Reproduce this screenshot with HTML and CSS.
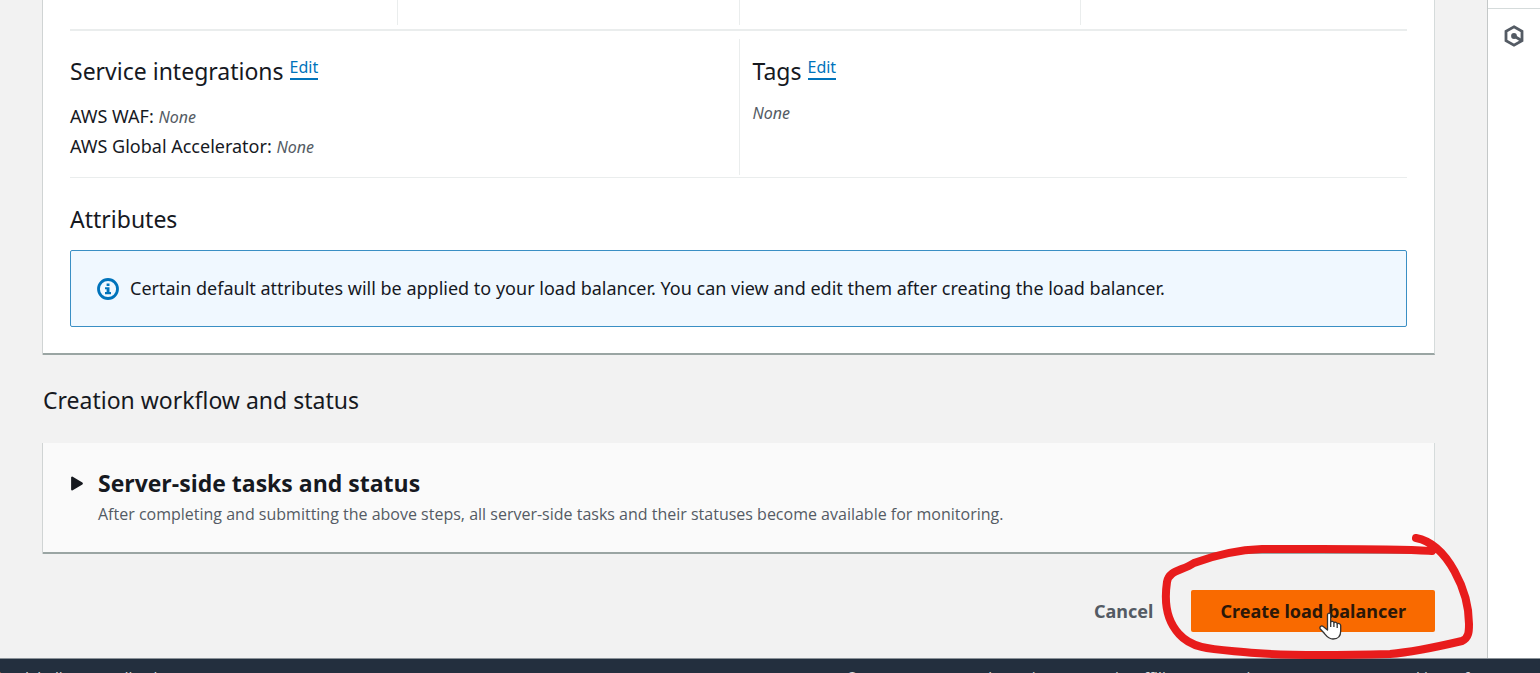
FILE: index.html
```html
<!DOCTYPE html>
<html lang="en">
<head>
<meta charset="utf-8">
<title>Create load balancer</title>
<link rel="stylesheet" href="styles.css">
</head>
<body>
<div class="workspace">
  <main class="content">
    <section class="card summary">
      <div class="summary-row summary-row-previous">
        <div class="cell"></div>
        <div class="cell"></div>
        <div class="cell"></div>
        <div class="cell"></div>
      </div>
      <div class="summary-row summary-row-details">
        <div class="cell">
          <h2 class="heading">Service integrations <a class="edit" href="#integrations">Edit</a></h2>
          <p class="detail">AWS WAF: <em class="none">None</em></p>
          <p class="detail">AWS Global Accelerator: <em class="none">None</em></p>
        </div>
        <div class="cell">
          <h2 class="heading">Tags <a class="edit" href="#tags">Edit</a></h2>
          <p class="tag-value"><em class="none">None</em></p>
        </div>
      </div>
      <div class="attributes">
        <h2 class="heading">Attributes</h2>
        <div class="notice">
          <svg class="notice-icon" viewBox="0 0 22 22" aria-hidden="true">
            <circle cx="11" cy="11" r="9.5" fill="none" stroke="currentColor" stroke-width="2.8"/>
            <path d="M9.600 5.400h2.900v2.500H9.600z M8 9.200h4.500v4.800h1.500v2.200H8v-2.200h1.600v-2.700H8z" fill="currentColor"/>
          </svg>
          <p class="notice-text">Certain default attributes will be applied to your load balancer. You can view and edit them after creating the load balancer.</p>
        </div>
      </div>
    </section>
    <h2 class="heading workflow-heading">Creation workflow and status</h2>
    <section class="card tasks">
      <button class="expander" type="button" aria-expanded="false" aria-label="Expand server-side tasks and status">
        <svg class="caret" viewBox="0 0 12 14" aria-hidden="true"><path d="M1.500 1.500v11L10.500 7z" fill="currentColor" stroke="currentColor" stroke-width="2" stroke-linejoin="round"/></svg>
      </button>
      <div>
        <h3 class="tasks-title">Server-side tasks and status</h3>
        <p class="tasks-text">After completing and submitting the above steps, all server-side tasks and their statuses become available for monitoring.</p>
      </div>
    </section>
    <div class="actions">
      <button class="button button-link" type="button">Cancel</button>
      <button class="button button-primary" type="button">Create load balancer</button>
      <svg class="annotation" viewBox="0 0 320 130" aria-hidden="true">
        <path d="M272 21C240 18 150 19 102 19C75 20 50 27 34 33C22 41 9 40 7 52C4 72 6 90 19 104C34 121 57 119 95 123C130 126 190 125 230 124C255 122 285 115 302 111C309 108 309 101 309 94C309 62 288 14 256 8" fill="none" stroke="#e81c1c" stroke-width="8" stroke-linecap="round" stroke-linejoin="round"/>
      </svg>
      <svg class="pointer" viewBox="0 0 24 28" aria-hidden="true">
        <path d="M8.500 3C8.500.5 11.700.5 11.700 3V10C12.500 8.800 14.700 9.200 14.900 10.700C16 9.700 18 10.200 18.200 11.800C19.500 11 21.700 11.800 21.700 13.800V19C21.700 24.500 18.500 27 14 27C9.500 27 7.500 24 5 21L1.300 17C0 15.200 2.300 13 4.200 14.500L8.500 18z" fill="#fff" stroke="#333" stroke-width="1.300" stroke-linejoin="round"/>
        <path d="M11.700 10v5M14.900 11v4M18.200 12v4" fill="none" stroke="#333" stroke-width="1.300"/>
      </svg>
    </div>
  </main>
  <aside class="tools">
    <button class="tool" type="button" aria-label="Resource tools">
      <svg class="tool-icon" viewBox="0 0 22 22" aria-hidden="true">
        <path d="M11 1.800 19 6.300V15.700L11 20.200 3 15.700V6.300z" fill="none" stroke="currentColor" stroke-width="2.800"/>
        <circle cx="11" cy="11" r="2.900" fill="currentColor"/>
        <path d="M11 11 18.500 15.500" stroke="currentColor" stroke-width="2.800"/>
      </svg>
    </button>
  </aside>
</div>
<footer class="footer">
  <a class="footer-link" href="#cloudshell">CloudShell</a>
  <a class="footer-link" href="#feedback">Feedback</a>
  <span class="copyright">© 2023, Amazon Web Services, Inc. or its affiliates.</span>
  <a class="footer-link" href="#privacy">Privacy</a>
  <a class="footer-link" href="#terms">Terms</a>
  <a class="footer-link" href="#cookies">Cookie preferences</a>
</footer>
</body>
</html>
```
FILE: styles.css
```css
* { box-sizing: border-box; }

body {
  height: 100vh;
  margin: 0;
  overflow: hidden;
  background: #f2f2f2;
  color: #16191f;
  font: 18px/29px "Noto Sans", "Open Sans", sans-serif;
}

h2, h3, p { margin: 0; font-weight: 400; }

button { padding: 0; border: 0; background: none; font: inherit; }

.workspace {
  display: grid;
  grid-template-columns: 1fr 53px;
}

.content { padding: 0 52px 26px 43px; }

.card {
  border-right: 1px solid #d5dbdb;
  border-bottom: 2px solid #9aa5a3;
  box-shadow: -1px 0 0 #d0d4d4;
}

.summary {
  padding: 0 27px 26px;
  background: #fff;
}

.summary-row {
  display: grid;
  grid-template-columns: 1fr 1fr;
}

.summary-row-previous {
  grid-template-columns: 24fr 25fr 25fr 24fr;
  height: 31px;
  padding-bottom: 4px;
  border-bottom: 2px solid #eaeded;
}

.summary-row-details {
  padding: 8px 0 2px;
  border-bottom: 1px solid #eaeded;
}

.cell { min-height: 25px; }

.cell + .cell {
  padding-left: 13px;
  border-left: 1px solid #eaeded;
}

.summary-row-details .cell {
  padding-top: 16px;
  padding-bottom: 13px;
}

.heading {
  font-size: 23px;
  line-height: 32px;
}

.summary-row-details .heading { margin-bottom: 15px; }

.edit {
  border-bottom: 2px solid #0073bb;
  color: #0073bb;
  font-size: 16px;
  line-height: 16px;
  text-decoration: none;
  vertical-align: 7px;
}

.none {
  color: #545b64;
  font-size: 16px;
}

.tag-value { line-height: 20px; }

.attributes { padding-top: 25px; }

.notice {
  display: flex;
  gap: 11px;
  align-items: center;
  margin-top: 15px;
  padding: 23px 26px;
  border: 1px solid #3a8fc4;
  border-radius: 2px;
  background: #f0f8ff;
}

.notice-icon {
  flex: none;
  width: 22px;
  height: 22px;
  color: #0073bb;
}

.workflow-heading { padding: 29px 0 27px; }

.tasks {
  display: flex;
  padding: 24px 27px 23px;
  background: #fafafa;
}

.expander {
  display: flex;
  width: 28px;
  height: 32px;
  align-items: center;
}

.caret {
  width: 14px;
  height: 15px;
  color: #16191f;
}

.tasks-title {
  margin-bottom: 1px;
  font-family: "Open Sans", "Noto Sans", sans-serif;
  font-size: 23px;
  font-weight: 700;
  line-height: 32px;
}

.tasks-text {
  color: #545b64;
  font-family: "Open Sans", "Noto Sans", sans-serif;
  font-size: 16px;
}

.actions {
  position: relative;
  display: flex;
  justify-content: flex-end;
  gap: 38px;
  padding-top: 36px;
}

.button {
  height: 42px;
  font-weight: 700;
}

.button-link { color: #545b64; }

.button-primary {
  padding: 0 29px;
  border-radius: 2px;
  background: #f96a00;
  color: #2b1708;
}

.annotation {
  position: absolute;
  top: -24px;
  right: -45px;
  width: 320px;
  height: 130px;
  pointer-events: none;
}

.pointer {
  position: absolute;
  top: 58px;
  right: 92px;
  width: 24px;
  height: 28px;
}

.tools {
  padding-top: 8px;
  border-left: 1px solid #c4c8c8;
  background: #fff;
}

.tool {
  display: flex;
  width: 100%;
  height: 54px;
  align-items: center;
  justify-content: center;
  border-top: 1px solid #d5dbdb;
}

.tool-icon {
  width: 22px;
  height: 22px;
  color: #545b64;
}

.footer {
  display: flex;
  gap: 32px;
  margin-left: -12px;
  padding: 8px 16px 8px 0;
  border-top: 1px solid #8b9299;
  background: #232f3e;
  color: #d5dbdb;
  font-size: 15px;
  line-height: 20px;
}

.footer-link {
  color: inherit;
  text-decoration: none;
}

.copyright { margin-left: auto; }
```
